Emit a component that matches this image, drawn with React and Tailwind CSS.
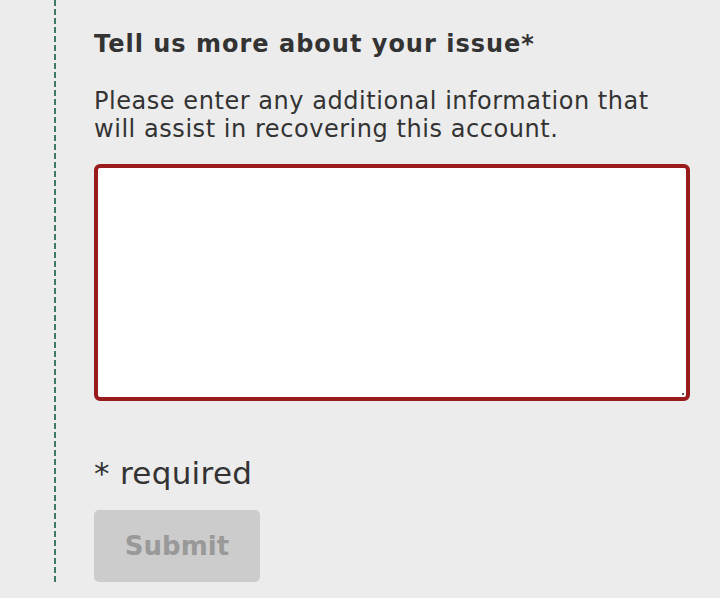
import React from 'react';

const App = () => {
  return (
    <div className="w-[720px] h-[598px] bg-[#ececec] flex pl-[54px] overflow-hidden" style={{ fontFamily: '"DejaVu Sans", sans-serif' }}>
      {/* dashed rule on the left */}
      <div className="w-[2px] h-[582px] shrink-0 bg-[repeating-linear-gradient(to_bottom,#3f7a66_0px,#3f7a66_6px,transparent_6px,transparent_9px)]" />

      <div className="pl-[38px] w-[636px] flex flex-col">
        <h2 className="mt-[28px] text-[24px] leading-[32px] font-bold tracking-[1px] text-[#333333]">
          Tell us more about your issue*
        </h2>
        <p className="mt-[27px] w-[580px] text-[24px] leading-[28px] tracking-[0.55px] text-[#333333]">
          Please enter any additional information that will assist in recovering this account.
        </p>
        <div className="relative mt-[21px] w-[596px] h-[237px]">
          <textarea
            className="block w-full h-full bg-white border-[4px] border-[#9a1b1b] rounded-[6px] outline-none resize-none"
            aria-label="Additional information"
          />
          <span className="absolute right-[6px] bottom-[6px] w-[2px] h-[2px] bg-[#555555]" />
        </div>
        <p className="mt-[54px] text-[31px] leading-[36px] tracking-[0.3px] text-[#333333]">* required</p>
        <button
          disabled
          className="mt-[19px] w-[166px] h-[72px] rounded-[5px] bg-[#cccccc] text-[#999999] text-[26px] font-bold"
        >
          Submit
        </button>
      </div>
    </div>
  );
};

export default App;
